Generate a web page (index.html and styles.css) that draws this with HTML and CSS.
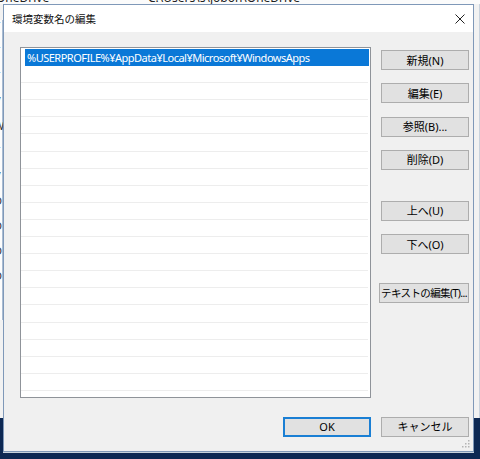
FILE: index.html
```html
<!DOCTYPE html>
<html lang="ja">
<head>
<meta charset="utf-8">
<title>環境変数名の編集</title>
<link rel="stylesheet" href="styles.css">
</head>
<body>
<div class="desktop">
  <div class="bgwin">
    <div class="bg-top">
      <span class="bg-t1">OneDrive</span>
      <span class="bg-t2">C:\Users\s\jobon\OneDrive</span>
    </div>
    <div class="bg-left">
      <span>T</span><span>T</span><span>T</span><span>V</span><span>W</span><span>T</span><span>V</span><span>D</span><span>D</span><span>D</span><span>D</span>
    </div>
  </div>

  <div class="dialog">
    <div class="titlebar">
      <span class="title">環境変数名の編集</span>
      <svg class="close" width="10" height="10" viewBox="0 0 10 10"><path d="M0.5 0.5 L9.5 9.5 M9.5 0.5 L0.5 9.5" stroke="#222" stroke-width="1" fill="none"/></svg>
    </div>
    <div class="body">
      <div class="main">
        <div class="list">
          <div class="row selected"><span class="row-text">%USERPROFILE%¥AppData¥Local¥Microsoft¥WindowsApps</span></div>
          <div class="row"></div><div class="row"></div><div class="row"></div><div class="row"></div>
          <div class="row"></div><div class="row"></div><div class="row"></div><div class="row"></div>
          <div class="row"></div><div class="row"></div><div class="row"></div><div class="row"></div>
          <div class="row"></div><div class="row"></div><div class="row"></div><div class="row"></div>
          <div class="row"></div><div class="row"></div><div class="row"></div><div class="row"></div>
        </div>
        <div class="side">
          <button class="btn">新規(N)</button>
          <button class="btn">編集(E)</button>
          <button class="btn">参照(B)...</button>
          <button class="btn">削除(D)</button>
          <button class="btn gap-up">上へ(U)</button>
          <button class="btn">下へ(O)</button>
          <button class="btn gap-text">テキストの編集(T)...</button>
        </div>
      </div>
      <div class="footer">
        <button class="btn default">OK</button>
        <button class="btn">キャンセル</button>
      </div>
      <svg class="grip" width="8" height="8" viewBox="0 0 8 8">
        <rect x="6" y="0" width="1.5" height="1.5" fill="#b4b4b4"/>
        <rect x="3" y="3" width="1.5" height="1.5" fill="#b4b4b4"/>
        <rect x="6" y="3" width="1.5" height="1.5" fill="#b4b4b4"/>
        <rect x="0" y="6" width="1.5" height="1.5" fill="#b4b4b4"/>
        <rect x="3" y="6" width="1.5" height="1.5" fill="#b4b4b4"/>
        <rect x="6" y="6" width="1.5" height="1.5" fill="#b4b4b4"/>
      </svg>
    </div>
  </div>
</div>
</body>
</html>
```

FILE: styles.css
```css
* { box-sizing: border-box; }
html, body {
  margin: 0;
  padding: 0;
  width: 480px;
  height: 459px;
  overflow: hidden;
}
body {
  font-family: "Noto Sans", "Noto Sans CJK JP", sans-serif;
  color: #000;
}
.desktop {
  position: relative;
  width: 480px;
  height: 459px;
  background: #0d2853;
  overflow: hidden;
}
.bgwin {
  position: absolute;
  left: 0;
  top: 0;
  width: 480px;
  height: 418px;
  background: #f2f2f2;
  border-right: 1px solid #c9d3de;
}
.bg-top {
  position: absolute;
  left: 0;
  top: -9px;
  width: 480px;
  height: 13px;
  background: #fbfbfb;
  font-size: 12px;
  line-height: 13px;
  color: #222;
}
.bg-t1 { position: absolute; left: -4px; top: 0; }
.bg-t2 { position: absolute; left: 148px; top: 0; }
.bg-left {
  position: absolute;
  left: -6px;
  top: 20px;
  width: 9px;
  height: 300px;
  display: flex;
  flex-direction: column;
  gap: 13px;
  font-size: 11px;
  line-height: 12px;
  color: #333;
  background: #fdfdfd;
  border-right: 1px solid #a9bcd2;
}
.dialog {
  position: absolute;
  left: 3px;
  top: 4px;
  width: 471px;
  height: 448px;
  border: 1px solid #7f98b8;
  background: #f0f0f0;
  display: flex;
  flex-direction: column;
  box-shadow: 0 1px 0 #c8d2dc;
}
.titlebar {
  height: 27px;
  background: #fff;
  display: flex;
  align-items: center;
  padding-left: 8px;
  padding-right: 8px;
  justify-content: space-between;
}
.title {
  font-size: 10.5px;
  color: #111;
  padding-top: 0;
}
.close {
  display: block;
  margin-top: 0;
}
.body {
  position: relative;
  flex: 1;
  padding: 15px 4px 0 16px;
  display: flex;
  flex-direction: column;
}
.main {
  display: flex;
  gap: 10px;
}
.list {
  width: 351px;
  height: 351px;
  border: 1px solid #8f9399;
  background: #fff;
  padding-top: 1px;
  overflow: hidden;
}
.row {
  height: 17.1px;
  margin-right: 2px;
  border-bottom: 1px solid #ededed;
}
.row.selected {
  margin-left: 4px;
  margin-right: 1px;
  background: #0a78d7;
  border-bottom-color: #0a78d7;
  display: flex;
  align-items: center;
  padding-left: 2px;
}
.row-text {
  color: #fff;
  font-size: 11px;
  white-space: nowrap;
  letter-spacing: -0.5px;
}
.side {
  display: flex;
  flex-direction: column;
  padding-top: 3px;
  gap: 13.33px;
}
.btn {
  width: 88px;
  height: 20px;
  padding: 0;
  margin: 0;
  border: 1px solid #adadad;
  background: #e1e1e1;
  font-family: "Noto Sans", "Noto Sans CJK JP", sans-serif;
  font-size: 11px;
  color: #000;
  white-space: nowrap;
  display: flex;
  align-items: center;
  justify-content: center;
  line-height: 1;
}
.btn.gap-up { margin-top: 17.67px; }
.btn.gap-text {
  margin-top: 15.67px;
  width: 90px;
  margin-left: -2px;
  font-size: 10.5px;
  letter-spacing: -0.6px;
}
.btn.default {
  border: 2px solid #1a7fd4;
}
.footer {
  display: flex;
  justify-content: flex-end;
  gap: 10px;
  padding-top: 18.5px;
}
.grip {
  position: absolute;
  right: 3px;
  bottom: 3px;
}
```
